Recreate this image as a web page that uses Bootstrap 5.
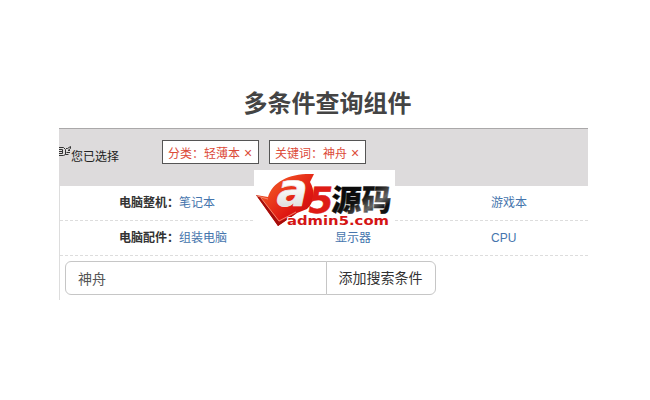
<!DOCTYPE html>
<html lang="zh-CN">
<head>
<meta charset="utf-8">
<meta name="viewport" content="width=device-width, initial-scale=1">
<title>多条件查询组件</title>
<link href="https://cdn.jsdelivr.net/npm/bootstrap@5.3.0/dist/css/bootstrap.min.css" rel="stylesheet">
<style>
body{font-family:"Liberation Sans","Noto Sans CJK SC",sans-serif;font-size:12px;line-height:17px;color:#333;height:400px;overflow:hidden}
.query{width:529px;margin-left:59px;padding-top:86px}
.query-title{font-size:24px;line-height:36px;height:42px;color:#444;padding-left:8px}
.chosen{height:58px;background:#dddbdc;border-top:1px solid #aaa8a9}
.chosen-label{width:103px;padding-top:19px;color:#222}
.hand{width:12px;height:12px;margin-top:-2px}
.chosen-label span{margin-top:1px}
.chips{gap:10px}
.chip{height:24px;width:97px;border:1px solid #555;color:#dc4a38;padding:0 0 0 5px;line-height:25px;margin-top:11px;white-space:nowrap}
.chip-close{font-size:14px;margin-left:4px}
.options{border-left:1px solid #ddd;height:114px}
.line{height:35px;border-bottom:1px dashed #ddd}
.line-name{width:119px;padding-left:59px;font-weight:700;white-space:nowrap;flex:none}
.line a{width:156px;color:#4575ad;flex:none}
.line a:last-child{width:97px}
.finder{width:371px;margin:5px 0 0 5px}
.finder .form-control,.finder .btn{height:34px;font-size:14px;line-height:20px;border-color:#c6c6c6;color:#555;padding:6px 12px}
.finder .btn{width:110px;color:#333;padding:6px 1px 6px 0;background:#fff}
.watermark{left:254px;top:170px;overflow:visible}
</style>
</head>
<body class="bg-white position-relative">
<main class="query">
  <h1 class="query-title fw-bold text-center mb-0">多条件查询组件</h1>
  <div class="chosen d-flex">
    <div class="chosen-label d-flex">
      <svg class="hand" viewBox="0 0 12 12" fill="none" stroke="#333" stroke-width="1"><path d="M0 1.5H4.5L6.5 3.5V8.5L4.5 9.5H0M0 3.5H3.5M0 5.5H3.5M0 7.5H3.5M3.5 3.5V7.5M7 2.5H8.5L11.5 0.5V2.5L9 4.5H11M7.5 6.5H11M6.5 8.5H9.5"/></svg><span>您已选择</span>
    </div>
    <div class="chips d-flex">
      <span class="chip bg-white">分类：轻薄本<span class="chip-close">×</span></span>
      <span class="chip bg-white">关键词：神舟<span class="chip-close">×</span></span>
    </div>
  </div>
  <div class="options">
    <div class="line d-flex align-items-center"><span class="line-name">电脑整机：</span><a href="#" class="text-decoration-none">笔记本</a><a href="#" class="text-decoration-none"></a><a href="#" class="text-decoration-none">游戏本</a></div>
    <div class="line d-flex align-items-center"><span class="line-name">电脑配件：</span><a href="#" class="text-decoration-none">组装电脑</a><a href="#" class="text-decoration-none">显示器</a><a href="#" class="text-decoration-none">CPU</a></div>
    <div class="finder input-group">
      <input class="form-control" type="text" value="神舟" aria-label="关键词">
      <button class="btn" type="button">添加搜索条件</button>
    </div>
  </div>
</main>
<svg class="watermark position-absolute" width="141" height="60" viewBox="0 0 141 60">
  <defs>
    <linearGradient id="red" x1="0" y1="0" x2="1" y2="1"><stop offset="0" stop-color="#a5160b"/><stop offset=".3" stop-color="#ee4720"/><stop offset=".65" stop-color="#df1712"/><stop offset="1" stop-color="#b80f0c"/></linearGradient>
    <linearGradient id="ink" x1="0" y1="0" x2="1" y2="1"><stop offset="0" stop-color="#000"/><stop offset=".5" stop-color="#111"/><stop offset=".68" stop-color="#666"/><stop offset=".8" stop-color="#111"/></linearGradient>
    <linearGradient id="silver" x1="0" y1="0" x2="0" y2="1"><stop offset=".4" stop-color="#fff"/><stop offset="1" stop-color="#d0d0d0"/></linearGradient>
  </defs>
  <rect width="141" height="60" fill="#fff"/>
  <path d="M2 25L14 27C19 11 36 3 60 4L56 12C61 20 61 32 53 39L43 43L24 56Z" fill="url(#red)"/>
  <path d="M2 25L24 56L43 43L25 52L7 28Z" fill="#a50d0b"/>
  <path d="M3 26L14 29M7 28L25 51L42 42" fill="none" stroke="#f79a82" stroke-width=".8"/>
  <text transform="translate(20 36) skewX(-12)" font-family="DejaVu Sans" font-weight="700" font-size="46" fill="url(#silver)" stroke="#eee" stroke-width=".6">a</text>
  <text transform="translate(52 43) skewX(-10)" font-family="DejaVu Sans" font-weight="700" font-size="36" fill="#de1b15" stroke="#de1b15" stroke-width=".5">5</text>
  <text transform="translate(77 41) skewX(-3)" font-family="Noto Sans CJK SC" font-weight="900" font-size="30" fill="url(#ink)" stroke="url(#ink)" stroke-width=".4">源码</text>
  <text x="33" y="55" textLength="102" lengthAdjust="spacingAndGlyphs" font-family="DejaVu Sans" font-weight="700" font-size="12.5" fill="#d41414" stroke="#fff" stroke-width="2" paint-order="stroke">admin5.com</text>
</svg>
<script src="https://cdn.jsdelivr.net/npm/bootstrap@5.3.0/dist/js/bootstrap.bundle.min.js"></script>
</body>
</html>
